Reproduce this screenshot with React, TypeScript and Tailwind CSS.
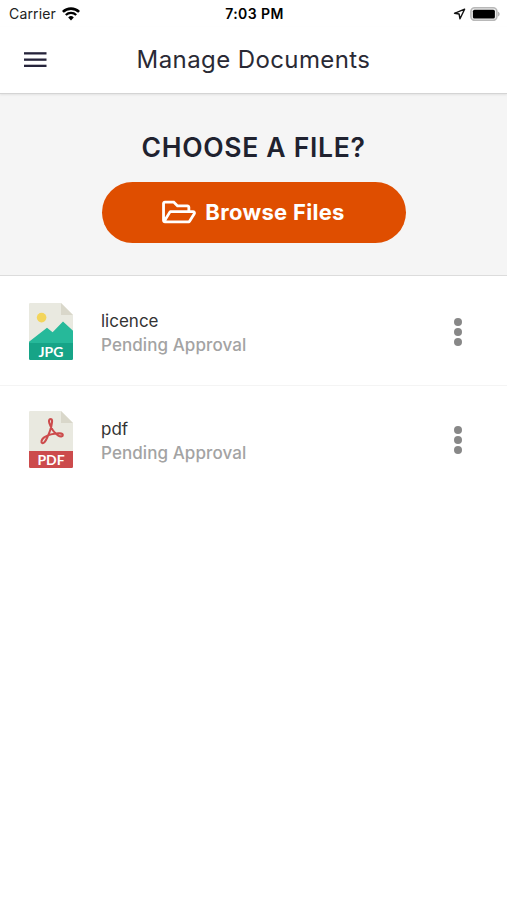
import React from "react";
import { FaRegFolderOpen } from "react-icons/fa";

type Doc = {
  name: string;
  status: string;
  type: "jpg" | "pdf";
};

const documents: Doc[] = [
  { name: "licence", status: "Pending Approval", type: "jpg" },
  { name: "pdf", status: "Pending Approval", type: "pdf" },
];

function WifiIcon() {
  return (
    <svg width="18" height="14" viewBox="0 0 18 14" fill="none" stroke="#000">
      <path d="M.9 4.9a11.7 11.7 0 0 1 16.2 0" strokeWidth="2.6" />
      <path d="M3.8 8a7.5 7.5 0 0 1 10.4 0" strokeWidth="2.3" />
      <path d="M6.2 10.4a4.1 4.1 0 0 1 5.6 0L9 13.4z" fill="#000" stroke="none" />
    </svg>
  );
}

function LocationIcon() {
  return (
    <svg width="13" height="12" viewBox="0 0 13 12" fill="none">
      <path
        d="M11.6 1.2 1.5 5.3l4.6.7.9 4.8z"
        stroke="#111"
        strokeWidth="1.4"
        strokeLinejoin="round"
      />
    </svg>
  );
}

function BatteryIcon() {
  return (
    <svg width="30" height="14" viewBox="0 0 30 14">
      <rect x="0.9" y="0.8" width="26" height="12.6" rx="3.8" fill="#eee" stroke="#b8b8b8" strokeWidth="1.6" />
      <rect x="2.9" y="2.7" width="22" height="8.8" rx="1.6" fill="#000" />
      <path d="M28 4.8c1.1.4 1.7 1.2 1.7 2.3s-.6 1.9-1.7 2.3z" fill="#b5b5b5" />
    </svg>
  );
}

function JpgIcon() {
  return (
    <svg width="44" height="57" viewBox="0 0 44 57">
      <path d="M1.2 0H32l12 12v29H0V1.2A1.2 1.2 0 0 1 1.2 0z" fill="#e9e9e0" />
      <path d="M32 0l12 12H32z" fill="#d9d7ca" />
      <circle cx="12.6" cy="14.6" r="4.8" fill="#f3d55b" />
      <path d="M0 41v-2.2L18 24.8l5.6 4.4L34 18.5l10 9.3V41z" fill="#26b99a" />
      <path d="M0 40h44v15.8a1.2 1.2 0 0 1-1.2 1.2H1.2A1.2 1.2 0 0 1 0 55.8z" fill="#16a487" />
      <text
        x="22"
        y="53.5"
        textAnchor="middle"
        fill="#fff"
        fontSize="14"
        fontWeight="700"
        fontFamily="Lato, sans-serif"
      >
        JPG
      </text>
    </svg>
  );
}

function PdfIcon() {
  return (
    <svg width="44" height="57" viewBox="0 0 44 57">
      <path d="M1.2 0H32l12 12v29H0V1.2A1.2 1.2 0 0 1 1.2 0z" fill="#e9e9e0" />
      <path d="M32 0l12 12H32z" fill="#d9d7ca" />
      <path
        d="M21.7 8c-1.8 0-2 2-1.3 4.2 1.8 5.3 4.9 9.8 8.9 12.4 2 1.2 4.6 1 4.5-.6-.2-1.900-4.700-1.900-8.400-1.300-4.400.6-8.400 2-10.900 4.200-2.100 1.700-2.700 4.700-1.200 5.200 1.600.5 3.400-2.200 4.800-5.300 2.300-4.900 4.200-9.900 4.700-14.300C23.300 10 23.200 8 21.700 8z"
        fill="none"
        stroke="#cc4b4c"
        strokeWidth="2.1"
      />
      <path d="M0 40h44v15.8a1.2 1.2 0 0 1-1.2 1.2H1.2A1.2 1.2 0 0 1 0 55.8z" fill="#cc4b4c" />
      <text
        x="22"
        y="53.5"
        textAnchor="middle"
        fill="#fff"
        fontSize="14"
        fontWeight="700"
        fontFamily="Lato, sans-serif"
      >
        PDF
      </text>
    </svg>
  );
}

function StatusBar() {
  return (
    <div className="grid h-[27px] grid-cols-3 items-center pr-[7px] pl-[9px] text-[14px] leading-none text-black">
      <div className="flex items-center gap-[6px]">
        <span className="tracking-[0.15px] text-[#222]">Carrier</span>
        <WifiIcon />
      </div>
      <span className="text-center font-semibold tracking-[0.4px]">7:03 PM</span>
      <div className="flex items-center justify-end gap-[4px]">
        <LocationIcon />
        <BatteryIcon />
      </div>
    </div>
  );
}

function DocumentRow({ doc }: { doc: Doc }) {
  return (
    <div className="flex h-[108px] items-center border-b border-[#f4f4f4] pr-[45px] pl-[29px] last:border-transparent">
      {doc.type === "jpg" ? <JpgIcon /> : <PdfIcon />}
      <div className="ml-7 flex-1 pt-[2px]">
        <p className="text-[17px] leading-6 text-[#333]">{doc.name}</p>
        <p className="text-[17px] leading-6 font-medium tracking-[0.08px] text-[#a3a3a3]">
          {doc.status}
        </p>
      </div>
      <button className="flex flex-col gap-[2px]">
        <span className="h-2 w-2 rounded-full bg-[#888]" />
        <span className="h-2 w-2 rounded-full bg-[#888]" />
        <span className="h-2 w-2 rounded-full bg-[#888]" />
      </button>
    </div>
  );
}

export default function App() {
  return (
    <div className="min-h-screen bg-white font-['Inter',sans-serif]">
      <StatusBar />
      <header className="relative z-10 flex h-[67px] items-center justify-center border-b border-[#d4d4d4] shadow-[0_1px_2px_rgba(0,0,0,0.08)]">
        <button className="absolute top-[25px] left-6">
          <svg width="23" height="16" viewBox="0 0 23 16" fill="#25233a">
            <rect y="0.2" width="22.5" height="2.3" />
            <rect y="6.5" width="22.5" height="2.3" />
            <rect y="12.7" width="22.5" height="2.3" />
          </svg>
        </button>
        <h1 className="text-[24px] leading-8 tracking-[0.4px] text-[#2a2a35]">Manage Documents</h1>
      </header>
      <section className="flex h-[182px] flex-col items-center border-b border-[#dcdcdc] bg-[#f5f5f5] pt-[37px]">
        <h2 className="text-[26.5px] leading-8 font-semibold tracking-[0.7px] text-[#20222f]">
          CHOOSE A FILE?
        </h2>
        <button className="mt-[19px] flex h-[61px] w-[304px] items-center justify-center gap-[9px] rounded-full bg-[#df4e00] pb-px text-white">
          <FaRegFolderOpen className="h-[30px] w-[34px]" />
          <span className="text-[22px] leading-7 font-bold tracking-[0.3px]">Browse Files</span>
        </button>
      </section>
      <main className="pt-[2px]">
        {documents.map((doc) => (
          <DocumentRow key={doc.name} doc={doc} />
        ))}
      </main>
    </div>
  );
}
